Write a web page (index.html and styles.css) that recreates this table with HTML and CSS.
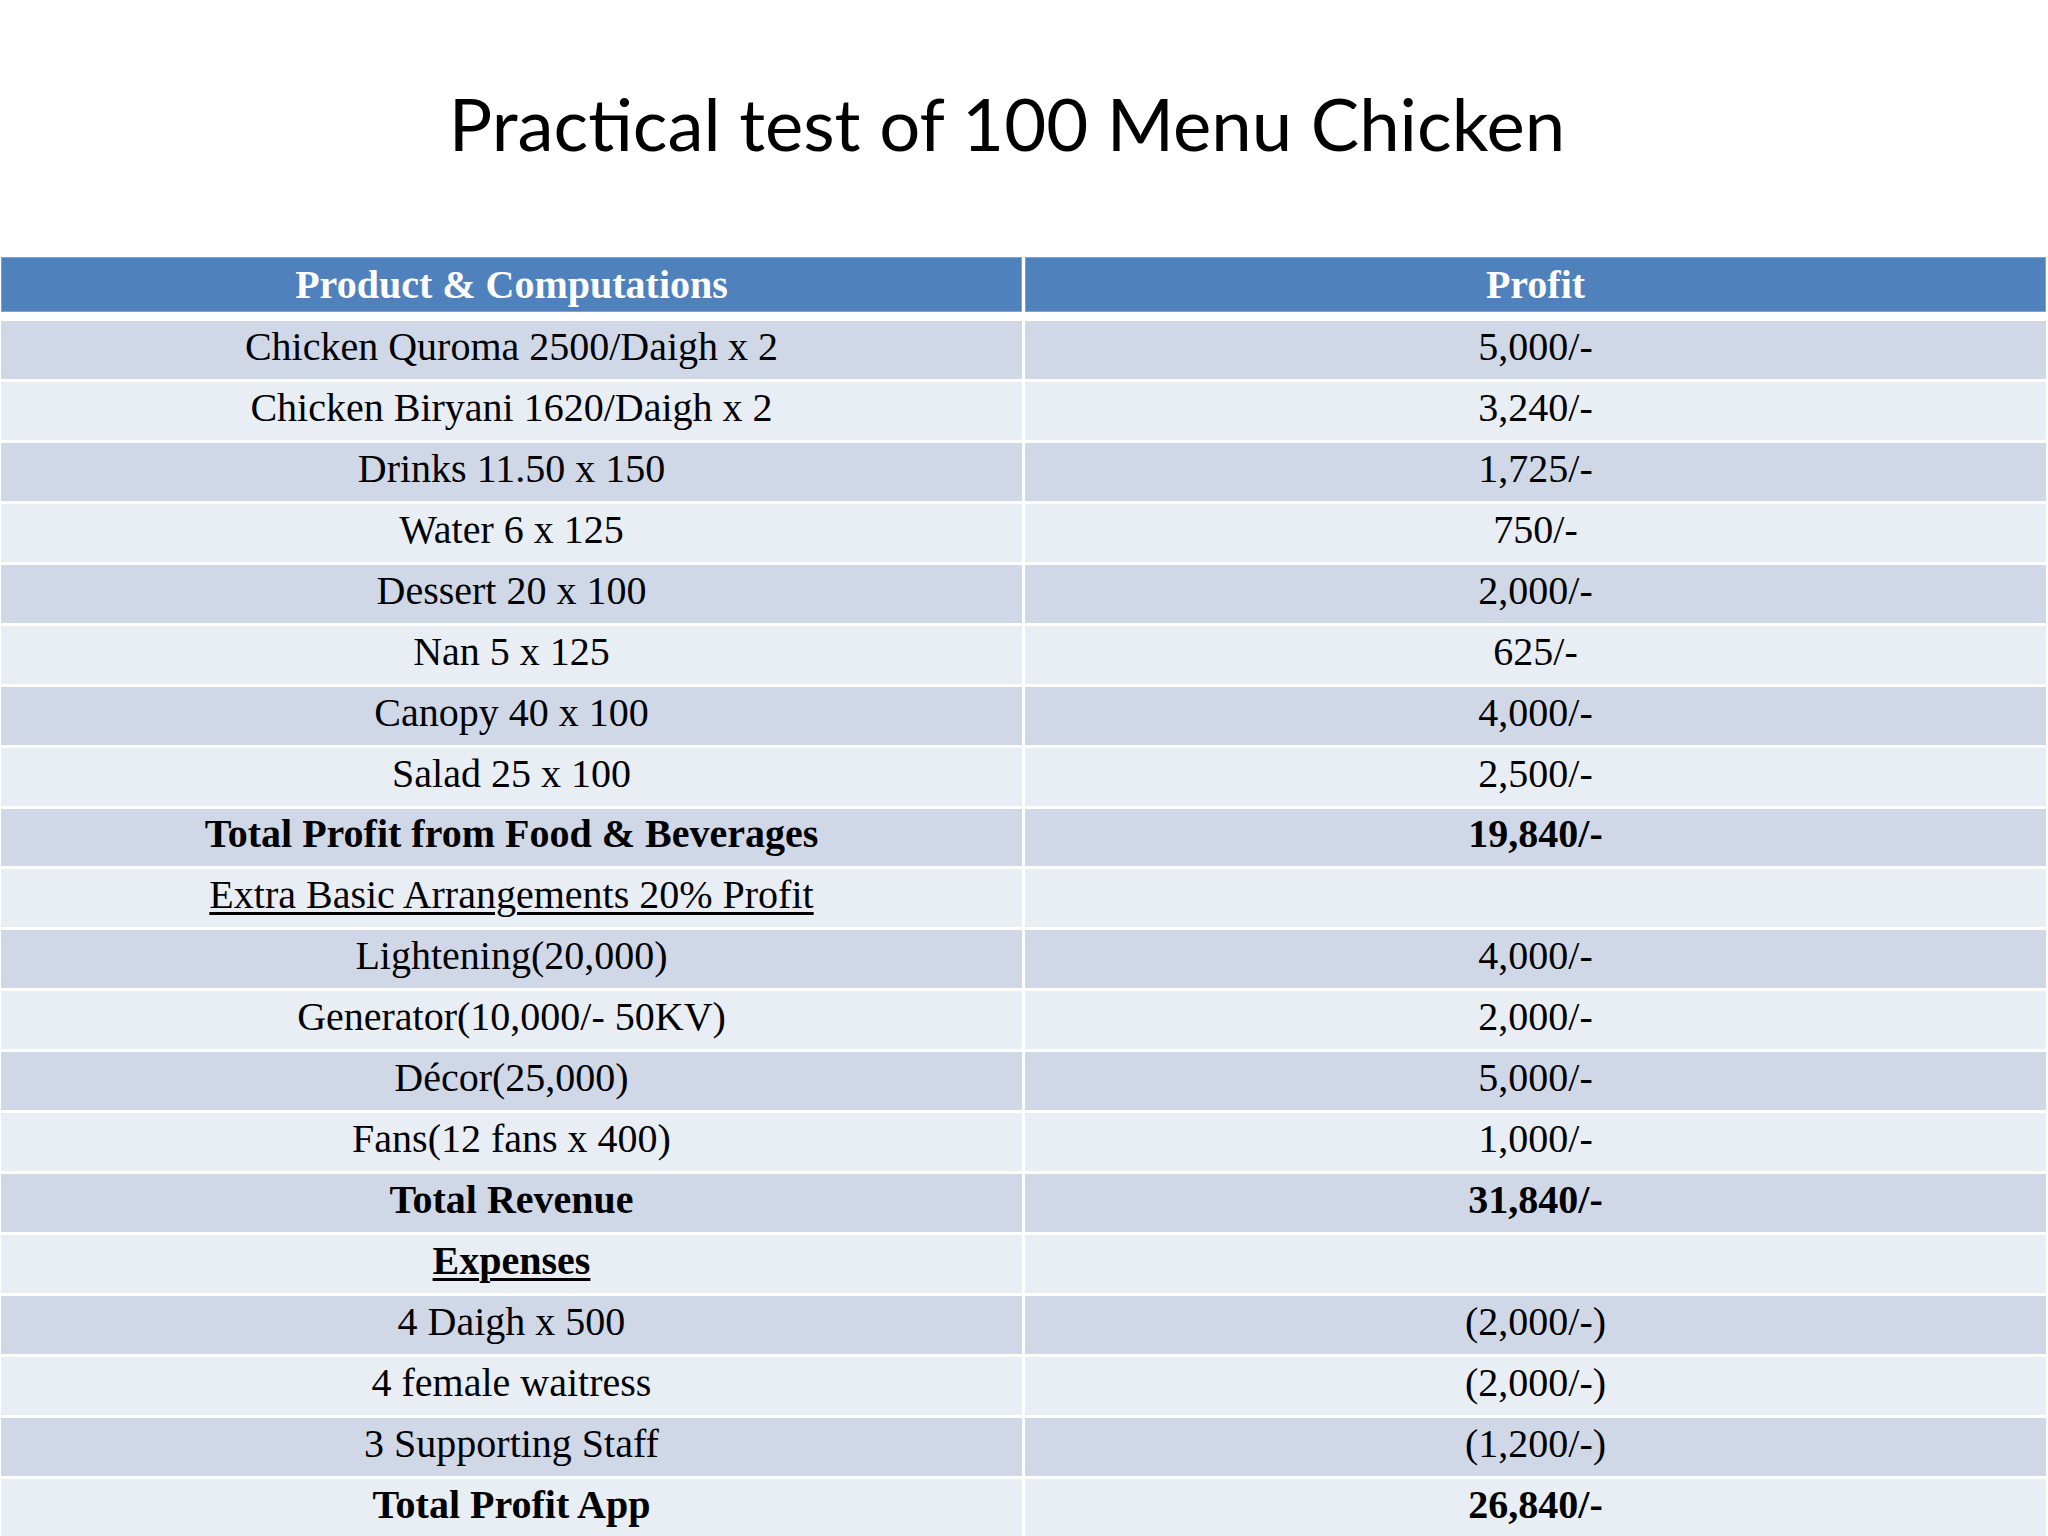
FILE: index.html
```html
<!DOCTYPE html>
<html>
<head>
<meta charset="utf-8">
<link rel="stylesheet" href="styles.css">
</head>
<body>
<div class="slide">
  <div class="title-area">
    <h1 class="title">Practical test of 100 Menu Chicken</h1>
  </div>
  <div class="grid">
    <div class="cell head">Product &amp; Computations</div>
    <div class="cell head">Profit</div>

    <div class="cell dark">Chicken Quroma 2500/Daigh x 2</div>
    <div class="cell dark">5,000/-</div>
    <div class="cell light">Chicken Biryani 1620/Daigh x 2</div>
    <div class="cell light">3,240/-</div>
    <div class="cell dark">Drinks 11.50 x 150</div>
    <div class="cell dark">1,725/-</div>
    <div class="cell light">Water 6 x 125</div>
    <div class="cell light">750/-</div>
    <div class="cell dark">Dessert 20 x 100</div>
    <div class="cell dark">2,000/-</div>
    <div class="cell light">Nan 5 x 125</div>
    <div class="cell light">625/-</div>
    <div class="cell dark">Canopy 40 x 100</div>
    <div class="cell dark">4,000/-</div>
    <div class="cell light">Salad 25 x 100</div>
    <div class="cell light">2,500/-</div>
    <div class="cell dark bold">Total Profit from Food &amp; Beverages</div>
    <div class="cell dark bold">19,840/-</div>
    <div class="cell light"><span class="ul">Extra Basic Arrangements 20% Profit</span></div>
    <div class="cell light"></div>
    <div class="cell dark">Lightening(20,000)</div>
    <div class="cell dark">4,000/-</div>
    <div class="cell light">Generator(10,000/- 50KV)</div>
    <div class="cell light">2,000/-</div>
    <div class="cell dark">Décor(25,000)</div>
    <div class="cell dark">5,000/-</div>
    <div class="cell light">Fans(12 fans x 400)</div>
    <div class="cell light">1,000/-</div>
    <div class="cell dark bold">Total Revenue</div>
    <div class="cell dark bold">31,840/-</div>
    <div class="cell light bold"><span class="ul">Expenses</span></div>
    <div class="cell light"></div>
    <div class="cell dark">4 Daigh x 500</div>
    <div class="cell dark">(2,000/-)</div>
    <div class="cell light">4 female waitress</div>
    <div class="cell light">(2,000/-)</div>
    <div class="cell dark">3 Supporting Staff</div>
    <div class="cell dark">(1,200/-)</div>
    <div class="cell light bold">Total Profit App</div>
    <div class="cell light bold">26,840/-</div>
  </div>
</div>
</body>
</html>
```

FILE: styles.css
```css
html, body {
  margin: 0;
  padding: 0;
  background: #ffffff;
}

.slide {
  width: 2048px;
  height: 1536px;
  overflow: hidden;
  background: #ffffff;
}

.title-area {
  height: 257px;
  box-sizing: border-box;
  padding-top: 87px;
  padding-right: 34px;
  display: flex;
  justify-content: center;
  align-items: flex-start;
}

.title {
  margin: 0;
  font-family: Lato, "Open Sans", sans-serif;
  font-weight: 400;
  font-size: 72.5px;
  line-height: 1;
  color: #000000;
  white-space: nowrap;
}

.grid {
  margin-left: 1px;
  width: 2045px;
  display: grid;
  grid-template-columns: 1fr 1fr;
  grid-template-rows: 61px repeat(20, 57.95px);
  column-gap: 3px;
  row-gap: 3px;
}

.cell {
  display: flex;
  align-items: center;
  justify-content: center;
  box-sizing: border-box;
  padding-bottom: 7px;
  font-family: "Liberation Serif", "Times New Roman", serif;
  font-size: 40px;
  color: #000000;
  white-space: nowrap;
}

.head {
  margin-bottom: 6px;
  padding-bottom: 0;
  background: #4f81bd;
  color: #ffffff;
  font-weight: 700;
  box-shadow: inset 0 0 0 1px #7fa3cf;
}

.dark {
  background: #d0d8e8;
}

.light {
  background: #e9edf4;
}

.bold {
  font-weight: 700;
}

.ul {
  text-decoration: underline;
  text-decoration-thickness: 3px;
  text-underline-offset: 4px;
}
```
